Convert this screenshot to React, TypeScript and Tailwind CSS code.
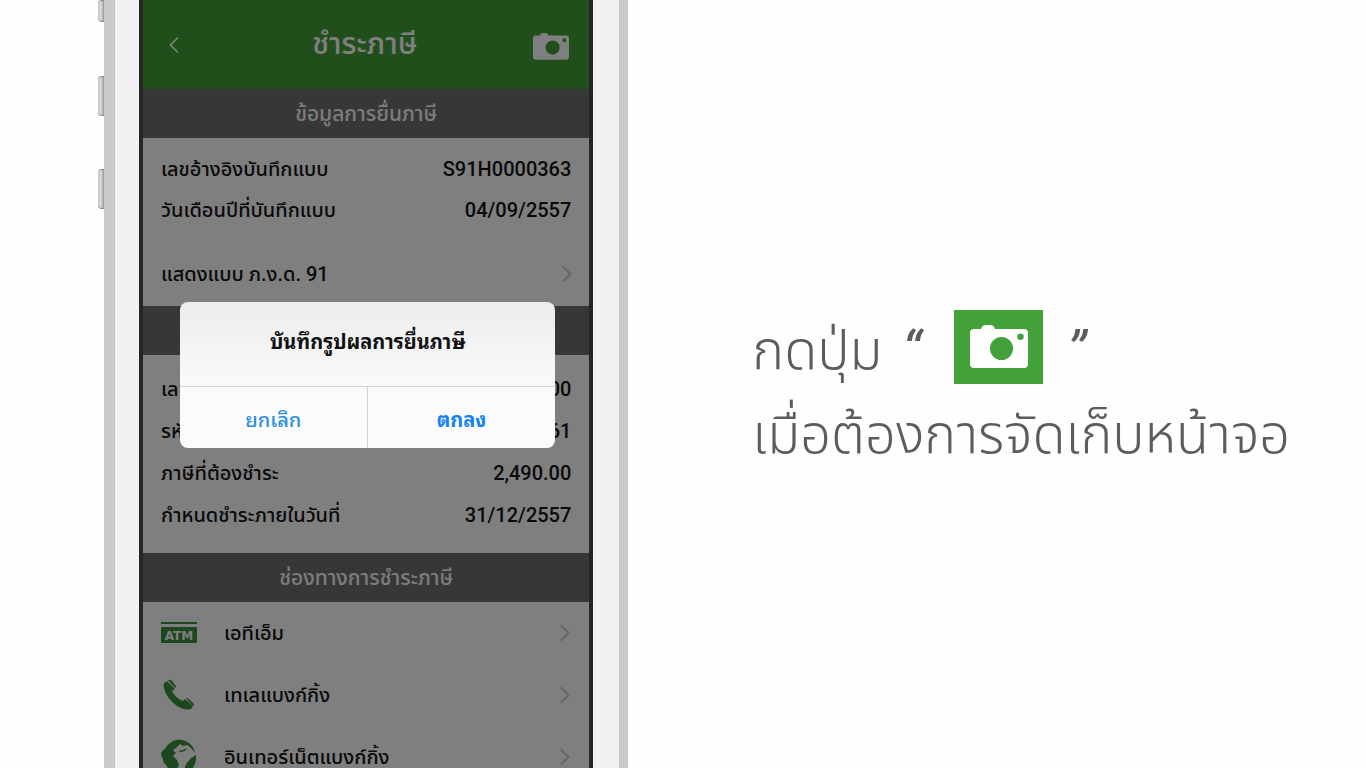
import React from 'react';
import { ChevronLeft, ChevronRight } from 'lucide-react';

const details = [
  { label: 'เลขอ้างอิงบันทึกแบบ', value: 'S91H0000363' },
  { label: 'วันเดือนปีที่บันทึกแบบ', value: '04/09/2557' },
];

const payment = [
  { label: 'เลข', value: '00' },
  { label: 'รหัส', value: '61' },
  { label: 'ภาษีที่ต้องชำระ', value: '2,490.00' },
  { label: 'กำหนดชำระภายในวันที่', value: '31/12/2557' },
];

const channels = [
  { label: 'เอทีเอ็ม', icon: <AtmIcon /> },
  { label: 'เทเลแบงก์กิ้ง', icon: <PhoneIcon /> },
  { label: 'อินเทอร์เน็ตแบงก์กิ้ง', icon: <GlobeIcon /> },
];

function CameraIcon({ className }: { className: string }) {
  return (
    <svg viewBox="0 0 58 44" className={className} aria-hidden="true">
      <path
        fill="currentColor"
        fillRule="evenodd"
        d="M4 4H11Q12 0 16 0H20Q24 0 25 4H54Q58 4 58 8V39Q58 43 54 43H4Q0 43 0 39V8Q0 4 4 4ZM31.500 12A11.500 11.500 0 1 0 31.500 35A11.500 11.500 0 1 0 31.500 12ZM50.500 8.500A3.200 3.200 0 1 0 50.500 15A3.200 3.200 0 1 0 50.500 8.500Z"
      />
    </svg>
  );
}

function AtmIcon() {
  return (
    <svg viewBox="0 0 36 22" className="w-9" aria-hidden="true">
      <rect width="36" height="2" fill="currentColor" />
      <rect y="5" width="36" height="16" rx="1" fill="currentColor" />
      <text x="18" y="18" textAnchor="middle" fontSize="12" fontWeight="700" fontFamily="DejaVu Sans" fill="#fff">ATM</text>
    </svg>
  );
}

function PhoneIcon() {
  return (
    <svg viewBox="0 0 32 32" className="ml-0.5 w-8" aria-hidden="true">
      <path
        fill="currentColor"
        d="M1 4L4 2L12 10L9 12Q12 19 20 22L22 20L30 27L28 30Q22 32 14 27Q3 19 1 9Q0 6 1 4Z"
      />
      <path
        fill="currentColor"
        d="M5 1Q7 0 9 2L13 7Q13 8 12 9ZM23 19Q25 19 26 20L31 25Q31 26 30 27Z"
      />
    </svg>
  );
}

function GlobeIcon() {
  return (
    <svg viewBox="0 0 36 36" className="w-9" aria-hidden="true">
      <path
        fill="currentColor"
        d="M12 2Q20 -2 28 4Q33 8 34 14Q30 8 26 6L22 7L19 5L15 9L12 11L15 14L12 17L16 21L18 26L14 33Q8 32 5 26Q1 23 2 19Q0 18 0 15Q1 11 4 10Q6 5 12 2Z"
      />
      <path
        fill="currentColor"
        d="M35 16Q36 25 30 31Q26 34 23 32L25 25L30 19ZM17 12L22 11L26 9L24 12L20 13Z"
      />
    </svg>
  );
}

function SectionBar({ children }: { children?: React.ReactNode }) {
  return (
    <h2 className="flex h-[49px] items-center justify-center bg-[#6e6e71] pt-0.5 text-[21px] font-medium text-[#f8f8f8]">{children}</h2>
  );
}

function SideButton({ className }: { className: string }) {
  return (
    <div className={`rounded-l-sm border-y border-[#888] bg-linear-to-r from-[#c4c4c4] via-[#dcdcdc] to-[#969696] ${className}`} />
  );
}

export default function App() {
  return (
    <main className="grid h-screen grid-cols-[46%_1fr] overflow-hidden bg-[#fefefe] font-['Roboto','Noto_Sans_Thai','Loma',sans-serif]">
      <section className="flex pl-[98px]">
        <div className="flex w-1.5 shrink-0 flex-col">
          <SideButton className="h-[22px]" />
          <SideButton className="mt-[54px] h-10" />
          <SideButton className="mt-[53px] h-10" />
        </div>

        <div className="flex min-w-0 flex-1 border-l-10 border-r-8 border-l-[#cbcbcb] border-r-[#cacaca]">
          <div className="flex min-w-0 flex-1 border-x border-[#c0c3c8] bg-[#f1f1f4] pl-6 pr-[26px]">
            <div className="relative h-[820px] min-w-0 flex-1 overflow-hidden border-x-4 border-[#252525] bg-white text-[#141414]">
              <header className="grid h-[89px] grid-cols-[36px_1fr_36px] items-center bg-[#429f38] pl-[17px] pr-5 text-white">
                <button type="button" aria-label="ย้อนกลับ">
                  <ChevronLeft className="h-8 w-7" strokeWidth={1.5} />
                </button>
                <h1 className="pb-0.5 text-center text-[30px] font-medium">ชำระภาษี</h1>
                <button type="button" aria-label="บันทึกหน้าจอ" className="pt-1">
                  <CameraIcon className="w-9" />
                </button>
              </header>

              <SectionBar>ข้อมูลการยื่นภาษี</SectionBar>
              <dl className="px-[18px] pt-2.5 text-xl font-medium">
                {details.map((row) => (
                  <div key={row.label} className="flex h-[41px] items-center justify-between">
                    <dt>{row.label}</dt>
                    <dd>{row.value}</dd>
                  </div>
                ))}
              </dl>
              <a href="#form" className="mt-3 flex h-16 items-center justify-between pl-[18px] pr-2 text-xl font-medium">
                <span>แสดงแบบ ภ.ง.ด. 91</span>
                <ChevronRight className="h-7 w-7 text-[#d0d0d0]" strokeWidth={2} />
              </a>

              <SectionBar />
              <dl className="px-[18px] pb-[17px] pt-[13px] text-xl font-medium">
                {payment.map((row) => (
                  <div key={row.label} className="flex h-[42px] items-center justify-between">
                    <dt>{row.label}</dt>
                    <dd>{row.value}</dd>
                  </div>
                ))}
              </dl>

              <SectionBar>ช่องทางการชำระภาษี</SectionBar>
              <nav className="text-xl font-medium">
                {channels.map((item) => (
                  <a key={item.label} href="#channel" className="flex h-[62px] items-center pl-[18px] pr-2.5">
                    <span className="w-[63px] text-[#3a8f3c]">{item.icon}</span>
                    <span className="flex-1">{item.label}</span>
                    <ChevronRight className="h-7 w-7 text-[#d0d0d0]" strokeWidth={2} />
                  </a>
                ))}
              </nav>

              {/* Save confirmation */}
              <div className="absolute inset-0 bg-black/50 pl-[37px] pr-[34px] pt-[302px]">
                <div
                  role="alertdialog"
                  aria-labelledby="save-title"
                  className="overflow-hidden rounded-lg bg-linear-to-b from-[#ececed] to-[#fbfbfc] to-60% font-['Noto_Sans_Thai_Looped','Loma','Waree','Garuda','Noto_Serif_Thai',sans-serif]"
                >
                  <h3 id="save-title" className="flex h-[84px] items-center justify-center pb-2 text-xl font-bold text-[#111]">
                    บันทึกรูปผลการยื่นภาษี
                  </h3>
                  <div className="grid h-[62px] grid-cols-2 border-t border-[#d4d4d6] text-xl">
                    <button type="button" className="border-r border-[#d4d4d6] font-medium text-[#2b8ee6]">ยกเลิก</button>
                    <button type="button" className="font-bold text-[#1583f5]">ตกลง</button>
                  </div>
                </div>
              </div>
            </div>
          </div>
        </div>
      </section>

      <section className="pl-[124px] pt-[310px] text-[54px] font-light text-[#5c5c5c]">
        <p className="flex h-[74px] items-center">
          <span className="w-[150px] pt-1.5">กดปุ่ม</span>
          <span className="w-[52px] pt-1.5 font-normal italic">“</span>
          <span className="flex h-full w-[89px] items-center justify-center bg-[#42a138] text-white">
            <CameraIcon className="w-[58px]" />
          </span>
          <span className="pl-6 pt-1.5 font-normal italic">”</span>
        </p>
        <p className="mt-3.5 whitespace-nowrap leading-[74px]">เมื่อต้องการจัดเก็บหน้าจอ</p>
      </section>
    </main>
  );
}
